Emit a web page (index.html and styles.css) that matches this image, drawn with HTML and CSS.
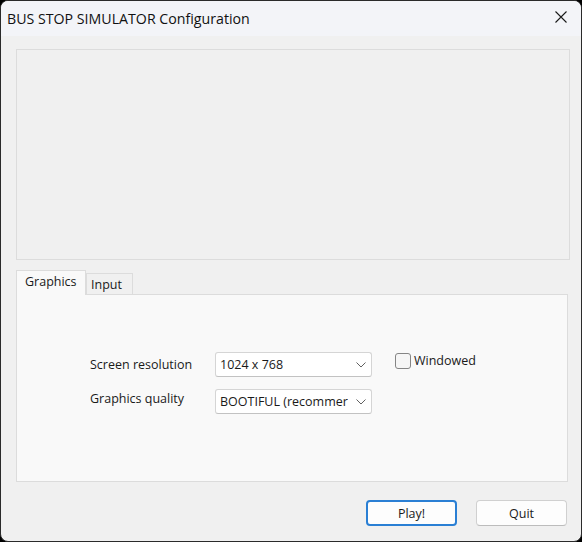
FILE: index.html
```html
<!DOCTYPE html>
<html>
<head>
<meta charset="utf-8">
<link rel="stylesheet" href="styles.css">
</head>
<body>
<div class="window">
  <div class="titlebar">
    <span class="title">BUS STOP SIMULATOR Configuration</span>
    <svg class="close" width="12" height="12" viewBox="0 0 12 12"><path d="M0.5 0.5L11.5 11.5M11.5 0.5L0.5 11.5" stroke="#1a1a1a" stroke-width="1.1" fill="none"/></svg>
  </div>
  <div class="content">
    <div class="banner"></div>
    <div class="tabs">
      <div class="tab active">Graphics</div>
      <div class="tab">Input</div>
    </div>
    <div class="page">
      <div class="form">
        <div class="label">Screen resolution</div>
        <div class="select"><span>1024 x 768</span><svg width="10" height="6" viewBox="0 0 10 6"><path d="M0.5 0.5L5 5L9.5 0.5" stroke="#606060" fill="none"/></svg></div>
        <label class="check"><span class="box"></span><span>Windowed</span></label>
        <div class="label label2">Graphics quality</div>
        <div class="select"><span>BOOTIFUL (recommer</span><svg width="10" height="6" viewBox="0 0 10 6"><path d="M0.5 0.5L5 5L9.5 0.5" stroke="#606060" fill="none"/></svg></div>
      </div>
    </div>
    <div class="footer">
      <button class="btn primary">Play!</button>
      <button class="btn">Quit</button>
    </div>
  </div>
</div>
</body>
</html>
```
FILE: styles.css
```css
html, body {
  margin: 0;
  padding: 0;
  background: #000;
}
* { box-sizing: border-box; }
.window {
  width: 582px;
  height: 542px;
  border: 1px solid #2a2a2a;
  border-radius: 8px;
  background: #f0f0f0;
  overflow: hidden;
  font-family: "Open Sans", "Noto Sans", sans-serif;
  color: #1a1a1a;
  display: flex;
  flex-direction: column;
}
.titlebar {
  height: 35px;
  flex: none;
  background: #f3f4f8;
  display: flex;
  align-items: center;
  justify-content: space-between;
  padding: 0 14px 0 6px;
}
.title {
  font-size: 14.2px;
  color: #111;
  margin-top: -1px;
}
.close { margin-top: -4px; }
.content {
  padding: 13px 0 0 15px;
  display: flex;
  flex-direction: column;
}
.banner {
  width: 554px;
  height: 211px;
  border: 1px solid #dcdcdc;
  background: #f0f0f0;
}
.tabs {
  margin-top: 10px;
  height: 24px;
  display: flex;
  align-items: flex-end;
}
.tab {
  font-size: 12.5px;
  border: 1px solid #dcdcdc;
  border-bottom: none;
  background: #f0f0f0;
  height: 21px;
  width: 47px;
  padding: 2px 0 0 4px;
  line-height: 17px;
}
.tab.active {
  width: 70px;
  background: #f9f9f9;
  padding: 2px 0 0 8px;
  line-height: 18px;
  position: relative;
  margin-bottom: -1px;
  height: 25px;
  z-index: 1;
}
.page {
  width: 552px;
  height: 188px;
  border: 1px solid #dcdcdc;
  background: #f9f9f9;
}
.form {
  display: grid;
  grid-template-columns: 125px 157px auto;
  row-gap: 12px;
  padding: 57px 0 0 73px;
  align-items: center;
  font-size: 12.5px;
}
.label { line-height: 16px; }
.label2 { margin-top: -5px; }
.select {
  height: 25px;
  border: 1px solid #d5d5d5;
  border-bottom-color: #c2c2c2;
  border-radius: 3px;
  background: #fff;
  display: flex;
  align-items: center;
  justify-content: space-between;
  padding: 0 5px 0 4px;
  white-space: nowrap;
  overflow: hidden;
}
.select span { overflow: hidden; }
.select svg { flex: none; margin-left: 4px; }
.check {
  display: flex;
  align-items: center;
  gap: 3px;
  margin-left: 23px;
  margin-top: -8px;
}
.box {
  width: 16px;
  height: 16px;
  border: 1px solid #858585;
  border-radius: 3px;
  background: #f6f6f6;
}
.footer {
  margin-top: 18px;
  display: flex;
  justify-content: flex-end;
  gap: 19px;
  padding-right: 14px;
}
.btn {
  font-family: "Open Sans", "Noto Sans", sans-serif;
  font-size: 12.5px;
  color: #1a1a1a;
  width: 91px;
  height: 26px;
  border: 1px solid #d0d0d0;
  border-bottom-color: #bcbcbc;
  border-radius: 4px;
  background: #fdfdfd;
  padding: 0;
}
.btn.primary {
  border: 2px solid #2a7fd4;
  border-radius: 4px;
}
```
